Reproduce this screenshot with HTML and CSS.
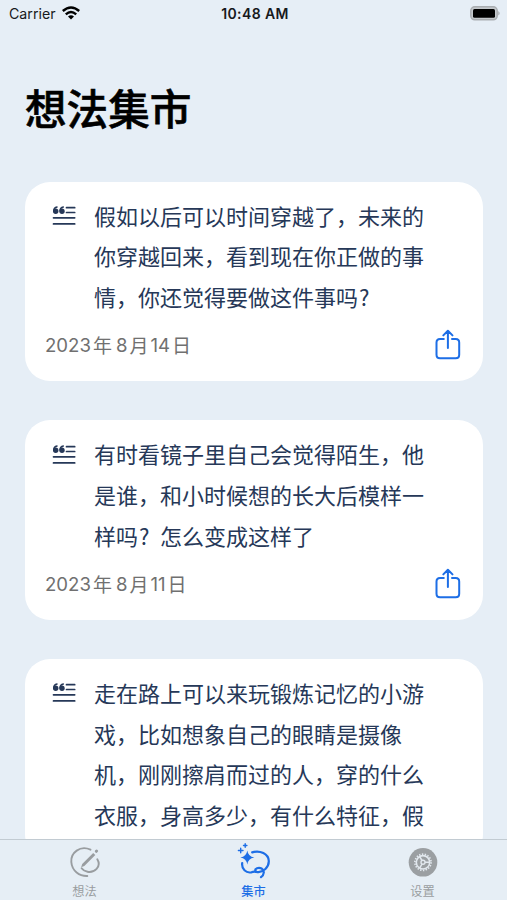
FILE: index.html
```html
<!DOCTYPE html>
<html lang="zh-CN">
<head>
<meta charset="utf-8">
<title>想法集市</title>
<link rel="stylesheet" href="styles.css">
</head>
<body>
<svg width="0" height="0" class="defs">
  <symbol id="quote" viewBox="0 0 24 22">
    <path d="M14.5 2.7H22.7M14.5 7.5H22.7M1.5 12.8H22.7M1.5 18.9H22.7" fill="none" stroke="currentColor" stroke-width="1.7" stroke-linecap="round"/>
    <g fill="currentColor"><circle cx="3.7" cy="6.3" r="2.7"/><circle cx="10" cy="6.3" r="2.7"/></g>
    <path d="M1.8 5.8Q1.8 2.7 5 2.1M8.1 5.8Q8.1 2.7 11.3 2.1" fill="none" stroke="currentColor" stroke-width="1.5" stroke-linecap="round"/>
  </symbol>
  <symbol id="share" viewBox="0 0 26 32">
    <path d="M8.8 10H5Q1.5 10 1.5 13.5V25.7Q1.5 29.2 5 29.2H20.7Q24.2 29.2 24.2 25.7V13.5Q24.2 10 20.7 10H17M12.9 19V2M8.3 6.4L12.9 1.8L17.5 6.4" fill="none" stroke="currentColor" stroke-width="2" stroke-linecap="round" stroke-linejoin="round"/>
  </symbol>
</svg>
<div class="screen">
  <header class="status">
    <div class="carrier"><span>Carrier</span>
      <svg width="18" height="14" viewBox="0 0 18 14"><g fill="none" stroke="#000" stroke-width="2.4"><path d="M.8 5Q9-2.2 17.2 5"/><path d="M3.8 8.3Q9 3.6 14.2 8.3"/></g><path d="M6 10.4Q9 8 12 10.4L9 13.6Z"/></svg>
    </div>
    <div class="clock">10:48 AM</div>
    <svg class="battery" width="31" height="15" viewBox="0 0 31 15"><rect x=".8" y=".8" width="26.4" height="13" rx="4" fill="#c4c8cc" stroke="#a9adb1" stroke-width="1.5"/><rect x="3" y="3" width="22" height="8.8" rx="1.5"/><path d="M28.3 5Q31 7.3 28.3 9.6Z" fill="#a3a7ab"/></svg>
  </header>
  <h1>想法集市</h1>
  <main>
    <article class="card">
      <div class="idea"><svg class="quote"><use href="#quote"/></svg>
        <p>假如以后可以时间穿越了，未来的<br>你穿越回来，看到现在你正做的事<br>情，你还觉得要做这件事吗<span class="mark">?</span></p></div>
      <footer><time><span>2023</span><b>年</b><span>8</span><b>月</b><span>14</span><b>日</b></time><svg class="share"><use href="#share"/></svg></footer>
    </article>
    <article class="card">
      <div class="idea"><svg class="quote"><use href="#quote"/></svg>
        <p>有时看镜子里自己会觉得陌生，他<br>是谁，和小时候想的长大后模样一<br>样吗<span class="mark">?</span>怎么变成这样了</p></div>
      <footer><time><span>2023</span><b>年</b><span>8</span><b>月</b><span>11</span><b>日</b></time><svg class="share"><use href="#share"/></svg></footer>
    </article>
    <article class="card">
      <div class="idea"><svg class="quote"><use href="#quote"/></svg>
        <p>走在路上可以来玩锻炼记忆的小游<br>戏，比如想象自己的眼睛是摄像<br>机，刚刚擦肩而过的人，穿的什么<br>衣服，身高多少，有什么特征，假</p></div>
    </article>
  </main>
  <nav>
    <a><svg width="34" height="34" viewBox="0 0 34 34" fill="none" stroke="currentColor" stroke-width="1.9" stroke-linecap="round"><path d="M22.5 4.7C12-.2 2.6 8 3.3 17C4 26 11.5 31.3 19.3 31"/><path d="M29.3 14.3C34 22 26 28 19.5 26.8Q15.5 26 13.6 23.3"/><path d="M13.2 22.2L14.2 18.9L25.2 7.9L27.3 10L16.3 21Z" fill="currentColor" stroke="none"/><path d="M28.3 6.3L28.6 6" stroke-width="3"/></svg><span>想法</span></a>
    <a class="active"><svg width="34" height="34" viewBox="0 0 34 34" fill="none" stroke="currentColor" stroke-width="2.2" stroke-linecap="round"><path d="M15.2 7.4C23 5 31.5 8.8 31.8 16C32 22.5 26 27 21.5 27.2C18 27.2 17.2 24.3 20 23.2C23 22 27 23.8 26.8 27.5Q26.6 30.3 24 32.2"/><path d="M5.2 18C4.4 24 9 28.4 14.5 27.3Q16.5 26.5 18.5 26.8"/><path d="M10.3 5.5Q11.1 11.5 17.3 12.5Q11.1 13.5 10.3 19.5Q9.5 13.5 3.3 12.5Q9.5 11.5 10.3 5.5Z" fill="currentColor" stroke="none"/><path d="M3.7 3.2V7.8M1.4 5.5H6M8.2-1.2V2.2M6.5 .5H9.9" stroke-width="1.4"/></svg><span>集市</span></a>
    <a><svg width="34" height="34" viewBox="0 0 34 34"><circle cx="17" cy="17.3" r="14.3" fill="#9b9fa2"/><g fill="none" stroke="#e2e8ee"><circle cx="17" cy="17.3" r="8.1" stroke-width="1.7" stroke-dasharray="1.4 1.43"/><circle cx="17" cy="17.3" r="6.7" stroke-width="1.6"/><circle cx="17" cy="17.3" r="2" stroke-width="1.4"/><path d="M19 17.3H23.7M16 15.5L13.6 11.5M16 19.1L13.6 23.1" stroke-width="1.5"/></g></svg><span>设置</span></a>
  </nav>
</div>
</body>
</html>
```
FILE: styles.css
```css
* { box-sizing: border-box; }
body { margin: 0; background: #e6eef6; font-family: Inter, "Noto Sans CJK SC", sans-serif; }
.defs { position: absolute; }
.screen { width: 507px; height: 900px; overflow: hidden; display: flex; flex-direction: column; }
.status { height: 27px; flex: none; display: grid; grid-template-columns: 1fr auto 1fr; align-items: center; padding: 0 6px 0 9px; font-size: 14px; color: #17191c; }
.carrier { display: flex; align-items: center; gap: 6px; font-size: 14.2px; }
.carrier svg { margin-top: -1px; }
.clock { font-weight: 600; font-size: 14px; letter-spacing: .4px; }
.battery { justify-self: end; }
h1 { flex: none; margin: 48px 0 42.5px 25px; height: 64px; font: 500 41.6px/64px "Noto Sans CJK SC", sans-serif; color: #000; -webkit-text-stroke: .6px #000; }
main { flex: 1; min-height: 0; overflow: hidden; padding: 0 24px 0 25px; display: flex; flex-direction: column; gap: 39px; }
.card { flex: none; height: 199.7px; background: #fff; border-radius: 25px; padding: 15px 22px 0 20px; }
.idea { display: flex; color: #263858; }
.quote { flex: none; width: 24px; height: 22px; margin: 8.5px 17px 0 7px; }
.idea p { margin: -2px 0 0 1px; white-space: nowrap; font: 400 22px/40.8px "Noto Sans CJK SC", sans-serif; }
.mark { display: inline-block; width: 22px; padding-left: 1px; }
footer { display: flex; justify-content: space-between; align-items: center; height: 32px; margin-top: 12.5px; }
time { display: flex; align-items: center; color: #707070; font-size: 18.6px; gap: 2px; }
time b { font: 400 19px/28px "Noto Sans CJK SC", sans-serif; }
time b:nth-of-type(1) { margin-right: 2px; }
.share { width: 26px; height: 32px; color: #1d6ee6; }
nav { flex: none; height: 61px; border-top: 1px solid #c2cbd2; display: grid; grid-template-columns: repeat(3, 1fr); background: #e6eef5; }
nav a { display: flex; flex-direction: column; align-items: center; padding-top: 5px; color: #999da0; font: 400 12.2px/18px "Noto Sans CJK SC", sans-serif; }
nav svg { overflow: visible; }
nav span { margin-top: 2.5px; }
nav .active { color: #1d6ee6; font-weight: 500; }
```
